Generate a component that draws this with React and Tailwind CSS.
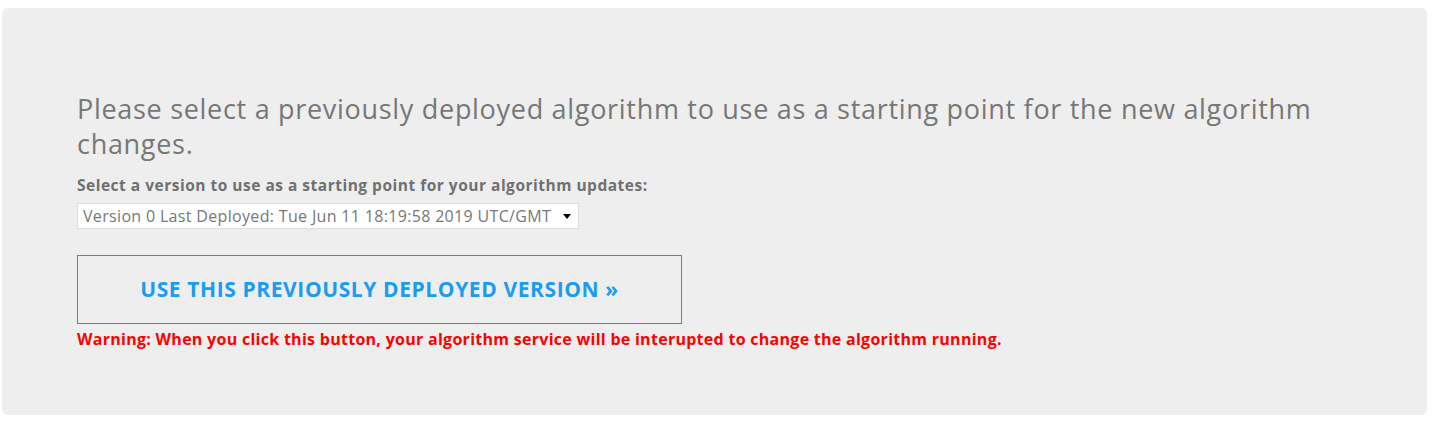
import React, { useState } from 'react';

const versions = [
  'Version 0 Last Deployed: Tue Jun 11 18:19:58 2019 UTC/GMT',
];

const App = () => {
  const [version, setVersion] = useState(versions[0]);

  return (
    <div className="bg-white pt-2 pl-[2px] pr-[15px] pb-[14px] font-['Open_Sans',sans-serif]">
      <div className="bg-[#eeeeee] rounded-md h-[407px] pl-[75px] pt-[83px]">
        <h2 className="text-[27px] leading-[35px] tracking-[0.7px] text-[#777777] font-normal max-w-[1250px]">
          Please select a previously deployed algorithm to use as a starting point for the new algorithm changes.
        </h2>

        <label className="block mt-[14px] text-[15.5px] leading-[20px] tracking-[0.5px] font-bold text-[#707070]">
          Select a version to use as a starting point for your algorithm updates:
        </label>

        <div className="relative mt-[8px] w-[502px]">
          <select
            value={version}
            onChange={(e) => setVersion(e.target.value)}
            className="appearance-none block w-full h-[26px] bg-white border border-[#dddddd] pl-[5px] pr-6 text-[16px] leading-[24px] tracking-[0.33px] text-[#777777] outline-none"
          >
            {versions.map((v) => (
              <option key={v} value={v}>{v}</option>
            ))}
          </select>
          <span className="pointer-events-none absolute right-[8px] top-[11px] w-0 h-0 border-l-[4px] border-r-[4px] border-t-[5px] border-l-transparent border-r-transparent border-t-black" />
        </div>

        <button className="mt-[26px] w-[605px] h-[69px] border border-[#2b93dd] bg-transparent text-[21px] font-bold text-[#1a9cf0] uppercase tracking-[0.6px]">
          Use this previously deployed version »
        </button>

        <p className="mt-[4px] text-[16px] leading-[22px] tracking-[0.28px] font-bold text-[#ff0000]">
          Warning: When you click this button, your algorithm service will be interupted to change the algorithm running.
        </p>
      </div>
    </div>
  );
};

export default App;
